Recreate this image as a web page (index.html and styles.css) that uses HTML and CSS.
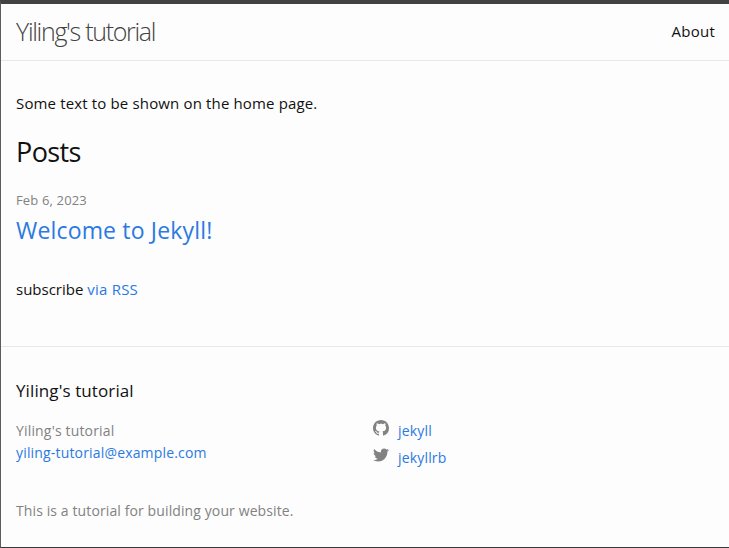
FILE: index.html
```html
<!DOCTYPE html>
<html lang="en">
<head>
<meta charset="utf-8">
<title>Yiling's tutorial</title>
<link rel="stylesheet" href="styles.css">
</head>
<body>
<header class="site-header">
  <a class="site-title" href="#">Yiling's tutorial</a>
  <nav><a class="page-link" href="#">About</a></nav>
</header>
<main class="page-content">
  <p class="intro">Some text to be shown on the home page.</p>
  <h2 class="post-list-heading">Posts</h2>
  <ul class="post-list">
    <li>
      <span class="post-meta">Feb 6, 2023</span>
      <h3 class="post-heading"><a class="post-link" href="#">Welcome to Jekyll!</a></h3>
    </li>
  </ul>
  <p class="rss-subscribe">subscribe <a href="#">via RSS</a></p>
</main>
<footer class="site-footer">
  <h2 class="footer-heading">Yiling's tutorial</h2>
  <div class="footer-cols">
    <ul class="contact-list">
      <li>Yiling's tutorial</li>
      <li><a class="email" href="#">yiling-tutorial@example.com</a></li>
    </ul>
    <ul class="social-list">
      <li><a href="#"><svg class="icon" viewBox="0 0 16 16"><path d="M8 0C3.58 0 0 3.58 0 8c0 3.54 2.29 6.53 5.47 7.59.4.07.55-.17.55-.38 0-.19-.01-.82-.01-1.49-2.01.37-2.53-.49-2.69-.94-.09-.23-.48-.94-.82-1.13-.28-.15-.68-.52-.01-.53.63-.01 1.08.58 1.23.82.72 1.21 1.87.87 2.33.66.07-.52.28-.87.51-1.07-1.78-.2-3.64-.89-3.64-3.95 0-.87.31-1.59.82-2.15-.08-.2-.36-1.02.08-2.12 0 0 .67-.21 2.2.82.64-.18 1.32-.27 2-.27s1.36.09 2 .27c1.53-1.04 2.2-.82 2.2-.82.44 1.1.16 1.92.08 2.12.51.56.82 1.27.82 2.15 0 3.07-1.87 3.75-3.65 3.95.29.25.54.73.54 1.48 0 1.07-.01 1.93-.01 2.2 0 .21.15.46.55.38A8.01 8.01 0 0 0 16 8c0-4.42-3.58-8-8-8z"/></svg><span>jekyll</span></a></li>
      <li><a href="#"><svg class="icon" viewBox="0 0 16 16"><path d="M15.969 3.058c-.586.26-1.217.436-1.878.515.675-.405 1.194-1.045 1.438-1.809-.632.375-1.332.647-2.076.793C12.856 1.921 12.006 1.524 11.065 1.524c-1.807 0-3.272 1.465-3.272 3.272 0 .256.029.506.085.745C5.159 5.404 2.748 4.102 1.134 2.122c-.282.483-.443 1.045-.443 1.645 0 1.135.578 2.137 1.455 2.724-.536-.017-1.04-.164-1.482-.409v.041c0 1.585 1.128 2.908 2.625 3.209-.275.075-.564.115-.862.115-.211 0-.416-.021-.616-.059.416 1.3 1.625 2.246 3.056 2.273-1.12.877-2.53 1.4-4.064 1.4-.264 0-.524-.015-.78-.046 1.448.929 3.168 1.471 5.016 1.471 6.019 0 9.31-4.986 9.31-9.31 0-.142-.003-.283-.009-.424.639-.461 1.194-1.037 1.633-1.694z"/></svg><span>jekyllrb</span></a></li>
    </ul>
  </div>
  <p class="description">This is a tutorial for building your website.</p>
</footer>
</body>
</html>
```
FILE: styles.css
```css
* { box-sizing: border-box; margin: 0; padding: 0; }
body {
  height: 548px;
  border-top: 4px solid #424242;
  border-left: 1px solid #5c5c5c;
  border-bottom: 1px solid #383838;
  background: #fdfdfd;
  color: #111;
  font: 400 15px/24px "Open Sans", "Noto Sans", sans-serif;
  overflow: hidden;
}
a { color: #2a7ae2; text-decoration: none; }
ul { list-style: none; }
h2, h3 { font-weight: 400; }
.site-header {
  height: 57px;
  padding: 0 14px 0 15px;
  border-bottom: 1px solid #e8e8e8;
  display: flex;
  justify-content: space-between;
  line-height: 54px;
}
.site-title { color: #424242; font-size: 25px; font-weight: 300; letter-spacing: -1.3px; }
.page-link { color: #111; letter-spacing: .25px; }
.page-content { padding: 30px 15px; height: 285px; }
.intro { letter-spacing: .15px; }
.post-list-heading { margin-top: 16px; font-size: 27px; line-height: 42px; letter-spacing: -.6px; }
.post-list { margin-top: 15px; }
.post-meta { display: block; color: #828282; font-size: 13px; line-height: 24px; letter-spacing: .15px; }
.post-heading { font-size: 23px; line-height: 36px; letter-spacing: .17px; }
.rss-subscribe { margin-top: 29px; }
.rss-subscribe a { letter-spacing: .22px; }
.site-footer { border-top: 1px solid #e8e8e8; padding: 30px 15px; color: #828282; font-size: 14px; line-height: 22px; letter-spacing: .17px; }
.footer-heading { color: #111; font-size: 17px; line-height: 27px; margin-bottom: 16px; letter-spacing: .1px; }
.footer-cols { display: grid; grid-template-columns: 357px 1fr; height: 80px; }
.social-list li { height: 27px; }
.social-list a { display: flex; gap: 9px; }
.icon { width: 16px; height: 16px; fill: #828282; }
.description { letter-spacing: .11px; }
```
